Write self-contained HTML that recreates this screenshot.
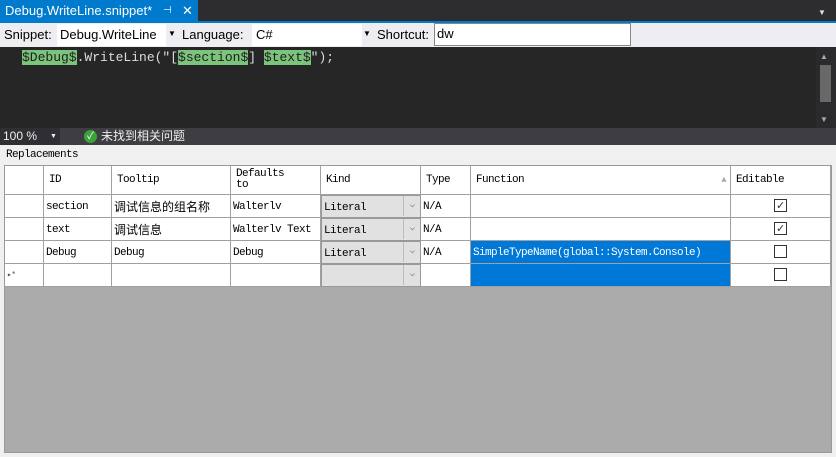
<!DOCTYPE html>
<html><head><meta charset="utf-8"><style>
*{margin:0;padding:0;box-sizing:border-box}
body{width:836px;height:457px;overflow:hidden;background:#f0f0f0;position:relative;font-family:"Liberation Sans","Noto Sans CJK SC",sans-serif;font-size:13px}
.a{position:absolute}
.mono{font-family:"Liberation Mono","Noto Sans CJK SC",monospace}
.serif{font-family:"Liberation Mono","Noto Sans CJK SC",monospace;font-size:11px;letter-spacing:-0.6px}
.hl{background:#7cc47c;color:#1e1e1e}
.c{position:absolute;border-right:1px solid #a0a0a0;border-bottom:1px solid #a0a0a0;background:#fff;white-space:nowrap;overflow:hidden;padding-left:2px;line-height:23px}
.cb{position:absolute;width:13px;height:13px;border:1px solid #333;background:#fff}
</style></head><body>
<div class="a" style="left:0;top:0;width:836px;height:21px;background:#2d2d30"></div>
<div class="a" style="left:0;top:0;width:198px;height:23px;background:#007acc;color:#fff;font-size:13px;line-height:22px;padding-left:5px">Debug.WriteLine.snippet*<span style="position:absolute;left:163px;font-size:10px">⊣</span><span style="position:absolute;left:182px">✕</span></div>
<div class="a" style="left:0;top:21px;width:836px;height:2px;background:#007acc"></div>
<div class="a" style="left:818px;top:8px;color:#ddd;font-size:8px">▼</div>
<div class="a" style="left:0;top:23px;width:836px;height:24px;background:#eeeef2"></div>
<div class="a" style="left:4px;top:27px">Snippet:</div>
<div class="a" style="left:57px;top:24px;width:109px;height:22px;background:#fff;padding-left:3px;line-height:22px">Debug.WriteLine</div>
<div class="a" style="left:168px;top:29px;font-size:8px">▼</div>
<div class="a" style="left:182px;top:27px">Language:</div>
<div class="a" style="left:252px;top:24px;width:110px;height:22px;background:#fff;padding-left:4px;line-height:22px">C#</div>
<div class="a" style="left:363px;top:29px;font-size:8px">▼</div>
<div class="a" style="left:377px;top:27px">Shortcut:</div>
<div class="a" style="left:434px;top:23px;width:197px;height:23px;background:#fff;border:1px solid #888;padding-left:2px;line-height:20px">dw</div>
<div class="a" style="left:0;top:47px;width:836px;height:81px;background:#262626"></div>
<div class="a mono" style="left:22px;top:49px;color:#dcdcdc;font-size:13px;line-height:17px"><span class="hl">$Debug$</span>.WriteLine("[<span class="hl">$section$</span>] <span class="hl">$text$</span>");</div>
<div class="a" style="left:816px;top:47px;width:20px;height:81px;background:#2a2a2c"></div>
<div class="a" style="left:820px;top:65px;width:11px;height:37px;background:#686868"></div>
<div class="a" style="left:820px;top:52px;color:#aaa;font-size:8px">▲</div>
<div class="a" style="left:820px;top:115px;color:#aaa;font-size:8px">▼</div>
<div class="a" style="left:0;top:128px;width:836px;height:17px;background:#3e3e42"></div>
<div class="a" style="left:0;top:128px;width:60px;height:17px;background:#2f2f33;color:#eee;font-size:12px;line-height:17px;padding-left:3px">100 %<span style="position:absolute;left:50px;font-size:7px">▼</span></div>
<div class="a" style="left:84px;top:130px;width:13px;height:13px;border-radius:50%;background:#3ba33b;color:#fff;font-size:10px;line-height:13px;text-align:center">✓</div>
<div class="a" style="left:101px;top:128px;color:#eee;font-size:12px;line-height:17px">未找到相关问题</div>
<div class="a serif" style="left:6px;top:149px">Replacements</div>
<div class="a" style="left:4px;top:165px;width:828px;height:288px;background:#ababab;border:1px solid #999"></div>
<div id="g"></div>
<script>
var cols=[5,44,112,231,321,421,471,731,831];
var rows=[166,195,218,241,264,287];
var h='';
var hdr=['','ID','Tooltip','Defaults<br>to','Kind','Type','Function','Editable'];
var data=[['','section','调试信息的组名称','Walterlv','Literal','N/A','',1],['','text','调试信息','Walterlv Text','Literal','N/A','',1],['','Debug','Debug','Debug','Literal','N/A','SimpleTypeName(global::System.Console)',0],['▸*','','','','','','',0]];
for(var c=0;c<8;c++){var x=cols[c],w=cols[c+1]-x;
 h+='<div class="c serif" style="left:'+x+'px;top:166px;width:'+w+'px;height:29px;line-height:'+(c==3?'11px;padding-top:3px':'28px')+';padding-left:'+(c==0?2:5)+'px">'+hdr[c]+(c==6?'<span style="position:absolute;right:4px;color:#aaa;font-size:9px">▲</span>':'')+'</div>';}
for(var r=0;r<4;r++){var y=rows[r+1],hh=rows[r+2]-y;
 for(var c=0;c<8;c++){var x=cols[c],w=cols[c+1]-x,v=data[r][c],st='padding-top:2px;line-height:20px;';
  if(c==6&&r>=2)st+='background:#0078d7;color:#fff;';
  if(c==4)st+='background:#e1e1e1;border:1px solid #999;';
  var ff=(c==2&&r<2)?'font-family:\'Noto Sans CJK SC\',sans-serif;font-size:12px;letter-spacing:0;':'';
  if(c==0)st+='font-size:8px;color:#555;';
  var inner=c==7?'<span class="cb" style="left:43px;top:4px">'+(v?'<span style="position:absolute;left:1px;top:-5px;font-size:11px;color:#333;font-family:Liberation Sans,sans-serif;line-height:23px">✓</span>':'')+'</span>':v;
  if(c==4)inner+='<span style="position:absolute;right:0;top:0;width:17px;height:20px;border-left:1px solid #bbb;font-size:9px;color:#666;text-align:center;line-height:18px">⌵</span>';
  h+='<div class="c serif" style="left:'+x+'px;top:'+y+'px;width:'+w+'px;height:'+hh+'px;'+st+ff+'">'+inner+'</div>';}}
document.getElementById('g').innerHTML=h;
</script>
</body></html>
